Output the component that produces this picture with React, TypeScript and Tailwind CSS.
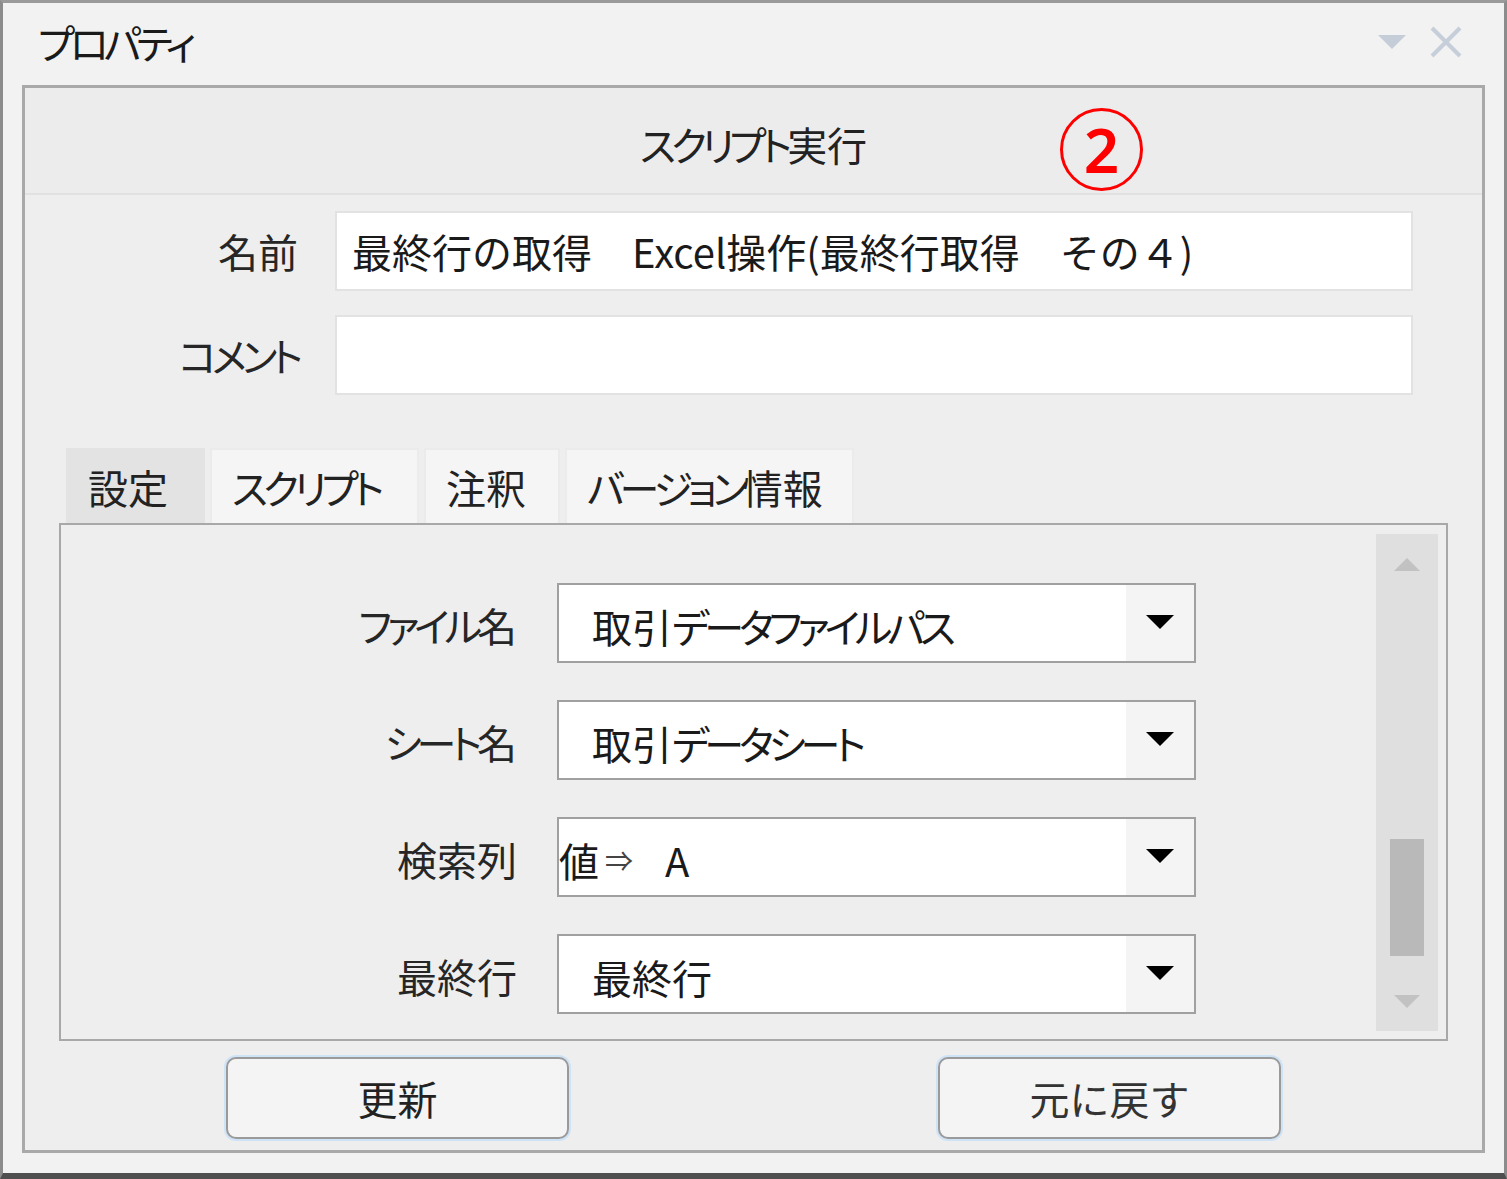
import React from "react"

const jp = "[font-family:'Noto_Sans_CJK_JP','Noto_Sans',sans-serif]"

// katakana in the original UI font is much narrower than Noto's, tighten it
function K({ children }: { children: React.ReactNode }) {
  return <span className="tracking-[-5px] [font-feature-settings:'palt']">{children}</span>
}

function DropArrow() {
  return (
    <svg width="28" height="14" viewBox="0 0 28 14">
      <path d="M0 0 H28 L14 14 Z" fill="#000" />
    </svg>
  )
}

function Combo({ children, flush }: { children: React.ReactNode; flush?: boolean }) {
  return (
    <div className="flex h-[80px] w-[639px] border-2 border-[#a0a0a0] bg-white">
      <div className={`flex flex-1 items-center pt-[5px] text-[40px] text-[#1a1a1a] ${flush ? "pl-0" : "pl-[33px]"}`}>
        {children}
      </div>
      <div className="flex w-[68px] items-center justify-center bg-[#f4f4f4] pb-[2px]">
        <DropArrow />
      </div>
    </div>
  )
}

function FieldRow({ label, children, flush }: { label: React.ReactNode; children: React.ReactNode; flush?: boolean }) {
  return (
    <div className="flex items-center">
      <div className="w-[456px] pt-[3px] text-right text-[40px] text-[#262626]">{label}</div>
      <div className="ml-[40px]">
        <Combo flush={flush}>{children}</Combo>
      </div>
    </div>
  )
}

function Tab({ children, active, w }: { children: React.ReactNode; active?: boolean; w: string }) {
  return (
    <div
      className={`flex h-[75px] items-center border-2 border-b-0 pl-[20px] text-[40px] text-[#222] ${w} ${
        active ? "border-[#e3e3e3] bg-[#e3e3e3]" : "border-[#ebebeb] bg-[#f5f5f5]"
      }`}
    >
      {children}
    </div>
  )
}

export default function App() {
  return (
    <div className={`h-[1179px] w-[1507px] overflow-hidden ${jp}`}>
      <div className="flex h-full w-full flex-col border-x-[3px] border-t-[3px] border-b-[6px] border-x-[#8c8c8c] border-t-[#9a9a9a] border-b-[#4f4f4f] bg-[#f2f2f2]">
        {/* title bar */}
        <div className="flex h-[82px] shrink-0 items-center justify-between pl-[35px] pr-[42px]">
          <span className="pb-[4px] text-[40px] text-[#1a1a1a]">
            <K>プロパティ</K>
          </span>
          <div className="flex items-center gap-[24px] pb-[4px]">
            <svg width="28" height="14" viewBox="0 0 28 14">
              <path d="M0 0 H28 L14 14 Z" fill="#c5cdd8" />
            </svg>
            <svg width="32" height="32" viewBox="0 0 32 32">
              <path d="M2 2 L30 30 M30 2 L2 30" stroke="#c6ced9" strokeWidth="4" />
            </svg>
          </div>
        </div>

        {/* inner panel */}
        <div className="ml-[19px] flex h-[1068px] w-[1463px] flex-col border-[3px] border-[#a9a9a9] bg-[#eeeeee]">
          <div className="relative flex h-[107px] shrink-0 items-center justify-center border-b-2 border-[#e1e1e1] bg-[#ececec]">
            <span className="mt-[6px] text-[40px] text-[#222]">
              <K>スクリプト</K>実行
            </span>
            <span className="absolute left-[1035px] top-[20px] flex h-[83px] w-[83px] items-center justify-center rounded-full border-[3px] border-[#ff0000] pb-[2px] text-[62px] font-semibold leading-none text-[#ff0000] [font-family:'Noto_Sans',sans-serif]">
              2
            </span>
          </div>

          {/* name & comment */}
          <div className="mt-[16px] flex items-center">
            <div className="w-[273px] text-right text-[40px] text-[#262626]">名前</div>
            <div className="ml-[37px] flex h-[80px] w-[1078px] items-center border-2 border-[#e2e2e2] bg-white pl-[15px] text-[40px] text-[#1a1a1a]">
              最終行の取得　Excel操作(最終行取得　その４)
            </div>
          </div>
          <div className="mt-[24px] flex items-center">
            <div className="w-[273px] text-right text-[40px] text-[#262626]">
              <K>コメント</K>
            </div>
            <div className="ml-[37px] h-[80px] w-[1078px] border-2 border-[#e2e2e2] bg-white" />
          </div>

          {/* tabs */}
          <div className="ml-[41px] mt-[53px] flex gap-[5px]">
            <Tab active w="w-[139px]">設定</Tab>
            <Tab w="w-[209px]">
              <K>スクリプト</K>
            </Tab>
            <Tab w="w-[136px]">注釈</Tab>
            <Tab w="w-[289px]">
              <K>バージョン</K>情報
            </Tab>
          </div>

          {/* tab page */}
          <div className="ml-[34px] flex h-[518px] w-[1389px] border-2 border-[#a8a8a8] bg-[#eeeeee]">
            <div className="flex flex-1 flex-col gap-[37px] pt-[58px]">
              <FieldRow label={<><K>ファイル</K>名</>}>
                取引<K>データファイルパス</K>
              </FieldRow>
              <FieldRow label={<><K>シート</K>名</>}>
                取引<K>データシート</K>
              </FieldRow>
              <FieldRow label="検索列" flush>
                値<span className="mx-[6px] text-[28px] text-[#444]">⇒</span>
                <span className="ml-[26px]">A</span>
              </FieldRow>
              <FieldRow label="最終行">最終行</FieldRow>
            </div>
            {/* scrollbar */}
            <div className="mr-[8px] mt-[9px] flex h-[497px] w-[62px] flex-col items-center bg-[#dfdfdf]">
              <svg className="mt-[24px]" width="26" height="13" viewBox="0 0 26 13">
                <path d="M0 13 H26 L13 0 Z" fill="#c2c2c2" />
              </svg>
              <div className="mt-[268px] h-[117px] w-[34px] bg-[#b9b9b9]" />
              <svg className="mt-[39px]" width="26" height="13" viewBox="0 0 26 13">
                <path d="M0 0 H26 L13 13 Z" fill="#c2c2c2" />
              </svg>
            </div>
          </div>

          {/* buttons */}
          <div className="mt-[16px] flex">
            <button className="ml-[201px] flex h-[82px] w-[343px] items-center justify-center rounded-[10px] border-2 border-[#9a9a9a] bg-[#f4f4f4] text-[40px] text-[#222] shadow-[0_0_0_2px_#cfe3f7]">
              更新
            </button>
            <button className="ml-[369px] flex h-[82px] w-[343px] items-center justify-center rounded-[10px] border-2 border-[#9a9a9a] bg-[#f4f4f4] text-[40px] text-[#333] shadow-[0_0_0_2px_#cfe3f7]">
              元に戻す
            </button>
          </div>
        </div>
      </div>
    </div>
  )
}
